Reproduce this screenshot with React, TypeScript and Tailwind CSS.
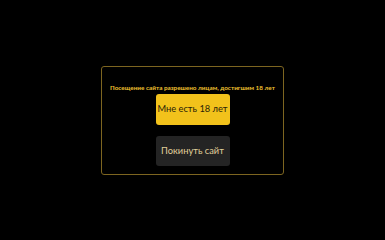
export default function App() {
  return (
    <div className="w-[385px] h-[240px] bg-black flex items-center justify-center" style={{ fontFamily: "Lato, 'Noto Sans', sans-serif" }}>
      <div className="w-[183px] h-[109px] border border-[#7d6520] rounded-[3px] flex flex-col items-center pt-[17px]">
        <div className="text-[6.35px] leading-[8px] font-bold text-[#f0c030] whitespace-nowrap">Посещение сайта разрешено лицам, достигшим 18 лет</div>
        <div className="mt-[2px] w-[74px] h-[31px] rounded-[3px] bg-[#f2c21b] text-[#2a2208] text-[9.3px] flex items-center justify-center whitespace-nowrap">Мне есть 18 лет</div>
        <div className="mt-[11px] w-[74px] h-[30px] rounded-[3px] bg-[#242424] text-[#e0cf9a] text-[9.3px] flex items-center justify-center whitespace-nowrap">Покинуть сайт</div>
      </div>
    </div>
  );
}
